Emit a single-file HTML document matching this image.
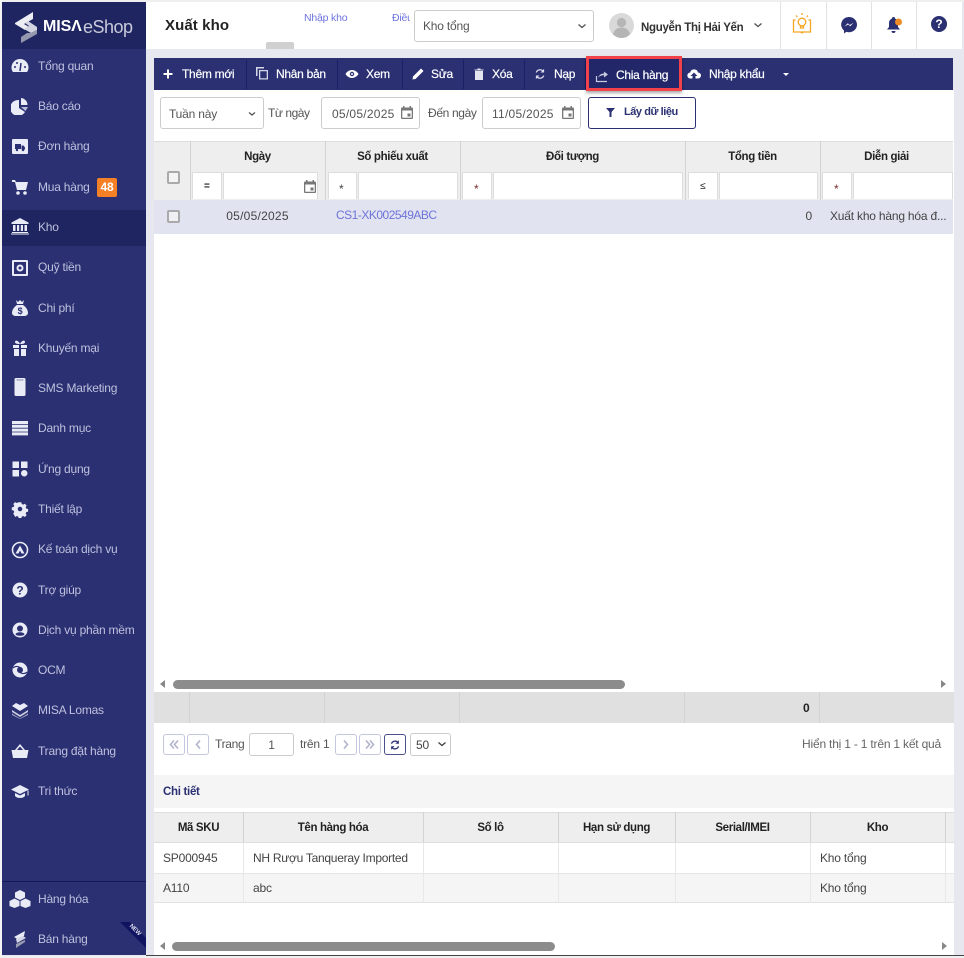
<!DOCTYPE html>
<html lang="vi"><head><meta charset="utf-8"><title>Xuất kho</title>
<style>
*{box-sizing:border-box}
html,body{margin:0;padding:0}
body{width:964px;height:958px;position:relative;overflow:hidden;background:#e7e8ef;font-family:"Liberation Sans","Noto Sans CJK SC",sans-serif;font-size:12px;color:#444;letter-spacing:-.2px}
.a{position:absolute}
.t{position:absolute;white-space:nowrap;line-height:16px}
.c{text-align:center}
.r{text-align:right}
.b{font-weight:bold;color:#222;font-size:11.5px;letter-spacing:-.35px}
.d{letter-spacing:.25px}
.nav{position:absolute;left:38px;color:#bfc1de;white-space:nowrap;line-height:16px;font-size:12px;letter-spacing:-.22px}
.ic{position:absolute;left:11px;width:18px;height:18px;fill:#e9ebf6}
.tb{position:absolute;top:66px;color:#fff;line-height:16px;white-space:nowrap;font-size:12px;letter-spacing:-.28px;-webkit-text-stroke:.2px #fff}
.sep{position:absolute;top:60px;width:1px;height:29px;background:#1b1f66}
.tic{position:absolute;width:14px;height:14px;fill:#fff}
.inp{position:absolute;background:#fff;border:1px solid #ccc;border-radius:3px}
.f{position:absolute;top:172px;height:27px;background:#fff;border:1px solid #ddd;border-bottom:0}
.pg{position:absolute;top:734px;width:22px;height:21px;border:1px solid #c5c7dc;border-radius:3px;background:#fff}
.pg svg{position:absolute;left:5px;top:4px}
.vl{position:absolute;width:1px;background:#d3d3d3}
</style></head><body>

<!-- page edges -->
<div class="a" style="left:0;top:0;width:964px;height:2px;background:#efefef"></div>
<div class="a" style="left:0;top:0;width:2px;height:958px;background:#f4f4f4"></div>

<!-- header -->
<div class="a" style="left:146px;top:2px;width:816px;height:47px;background:#fff"></div>
<div class="t" style="left:165px;top:17px;font-size:15px;line-height:18px;color:#222;font-weight:bold;letter-spacing:.1px">Xuất kho</div>
<div class="a" style="left:266px;top:42px;width:28px;height:7px;background:#d0d0d0;border-radius:2px 2px 0 0"></div>
<div class="t" style="left:304px;top:10px;font-size:10.5px;color:#6d74e0">Nhập kho</div>
<div class="a" style="left:392px;top:10px;width:18px;height:16px;overflow:hidden"><span class="t" style="left:0;top:0;font-size:10.5px;color:#6d74e0">Điều</span></div>
<div class="inp" style="left:414px;top:10px;width:180px;height:32px"></div>
<div class="t" style="left:423px;top:18px;color:#555">Kho tổng</div>
<svg class="a" style="left:577px;top:23px" width="10" height="7"><path d="M1.5 1.500L5 4.500L8.500 1.500" fill="none" stroke="#555" stroke-width="1.400"/></svg>
<svg class="a" style="left:609px;top:13px" width="25" height="25" viewBox="0 0 25 25"><circle cx="12.500" cy="12.500" r="12.500" fill="#d9d9d9"/><circle cx="12.500" cy="9.500" r="4.600" fill="#b5b5b5"/><path d="M4 21c1.500-5 5-6.500 8.500-6.500S19.500 16 21 21c-2 2.500-5 4-8.500 4S6 23.500 4 21z" fill="#b5b5b5"/></svg>
<div class="t b" style="left:641px;top:20px;color:#333;letter-spacing:-.3px">Nguyễn Thị Hải Yến</div>
<svg class="a" style="left:753px;top:22px" width="10" height="7"><path d="M1.500 1.500L5 4.500L8.500 1.500" fill="none" stroke="#555" stroke-width="1.400"/></svg>
<div class="vl" style="left:780px;top:2px;height:47px;background:#e2e2e2"></div>
<div class="vl" style="left:826px;top:2px;height:47px;background:#e2e2e2"></div>
<div class="vl" style="left:871px;top:2px;height:47px;background:#e2e2e2"></div>
<div class="vl" style="left:916px;top:2px;height:47px;background:#e2e2e2"></div>
<svg class="a" style="left:792px;top:12px" width="20" height="22" viewBox="0 0 20 22" fill="none" stroke="#f5a623" stroke-width="1.300"><circle cx="10" cy="10" r="3.800"/><path d="M8.500 14h3v2h-3zM10 1v2M4 3.500l1.300 1.300M16 3.500l-1.300 1.300M3.500 8H1.500v12h17V8h-2M1.500 20h7l1.500 1 1.500-1h7"/></svg>
<svg class="a" style="left:841px;top:17px" width="16" height="17" viewBox="0 0 16 17"><path d="M8 0a8 7.600 0 0 1 0 15.200c-.9 0-1.700-.1-2.500-.4L3 16.500v-3A7.600 7.600 0 0 1 8 0z" fill="#2a3072"/><path d="M3.500 9.500L6.800 6.300l2 1.700L12.500 5.800 9.300 9.200 7.200 7.500z" fill="#fff"/></svg>
<svg class="a" style="left:886px;top:17px" width="18" height="17" viewBox="0 0 18 17"><path d="M7.500 0a1.500 1.500 0 0 1 1.500 1.500 5 5 0 0 1 3 4.500v4l2 2.500H1L3 10V6a5 5 0 0 1 3-4.500A1.500 1.500 0 0 1 7.500 0zM5.500 14h4a2 2 0 0 1-4 0z" fill="#2a3072"/><circle cx="12.500" cy="5" r="3.500" fill="#f08a24"/></svg>
<svg class="a" style="left:931px;top:16px" width="16" height="16" viewBox="0 0 16 16"><circle cx="8" cy="8" r="8" fill="#2a3072"/><text x="8" y="12" text-anchor="middle" fill="#fff" font-size="12" font-weight="bold" font-family="Liberation Sans">?</text></svg>

<!-- sidebar -->
<div class="a" style="left:2px;top:2px;width:144px;height:953px;background:#2a3072"></div>
<div class="a" style="left:2px;top:2px;width:144px;height:47px;background:#1f2560"></div>
<div class="a" style="left:2px;top:210px;width:144px;height:36px;background:#1f2560"></div>
<div class="a" style="left:2px;top:881px;width:144px;height:1px;background:#15195a"></div>
<svg class="a" style="left:14px;top:10px" width="24" height="34" viewBox="0 0 24 34"><path d="M19 2v7l-9 5 5 3-4 3L1 14v-1z" fill="#eceef4"/><path d="M14 11l9 6v3l-6 3-7-4 5-3-4-3z" fill="#d2d3e0"/><path d="M23 20v4L7 33v-6l6-4 4 0z" fill="#9497ad"/></svg>
<div class="t" style="left:43px;top:17px;font-size:16px;line-height:20px;font-weight:bold;color:#fff;letter-spacing:-.1px">MISΛ</div>
<div class="t" style="left:83px;top:16px;font-size:18px;line-height:22px;color:#c9cadb;letter-spacing:-.5px">eShop</div>

<div class="nav" style="top:58px">Tổng quan</div>
<div class="nav" style="top:98px">Báo cáo</div>
<div class="nav" style="top:138px">Đơn hàng</div>
<div class="nav" style="top:179px">Mua hàng</div>
<div class="nav" style="top:219px">Kho</div>
<div class="nav" style="top:259px">Quỹ tiền</div>
<div class="nav" style="top:300px">Chi phí</div>
<div class="nav" style="top:340px">Khuyến mại</div>
<div class="nav" style="top:380px">SMS Marketing</div>
<div class="nav" style="top:420px">Danh mục</div>
<div class="nav" style="top:461px">Ứng dụng</div>
<div class="nav" style="top:501px">Thiết lập</div>
<div class="nav" style="top:541px">Kế toán dịch vụ</div>
<div class="nav" style="top:582px">Trợ giúp</div>
<div class="nav" style="top:622px">Dịch vụ phần mềm</div>
<div class="nav" style="top:662px">OCM</div>
<div class="nav" style="top:702px">MISA Lomas</div>
<div class="nav" style="top:743px">Trang đặt hàng</div>
<div class="nav" style="top:783px">Tri thức</div>
<div class="nav" style="top:891px">Hàng hóa</div>
<div class="nav" style="top:931px">Bán hàng</div>
<div class="a" style="left:97px;top:178px;width:20px;height:19px;background:#f58025;border-radius:2px;color:#fff;font-weight:bold;text-align:center;line-height:19px;font-size:12px">48</div>

<svg class="ic" style="top:57px" viewBox="0 0 18 18"><path d="M9 2a8.500 8.500 0 0 1 8.500 8.500c0 2-.6 3.500-1.500 4.500H2c-.9-1-1.500-2.500-1.500-4.500A8.500 8.500 0 0 1 9 2z"/><path d="M9 14L10 6" stroke="#2a3072" stroke-width="1.500"/><circle cx="4" cy="10" r="1" fill="#2a3072"/><circle cx="14" cy="10" r="1" fill="#2a3072"/><circle cx="6" cy="6" r="1" fill="#2a3072"/></svg>
<svg class="ic" style="top:97px" viewBox="0 0 18 18"><path d="M8 3v8l6 4A8 8 0 1 1 8 3z"/><path d="M10 1a7 7 0 0 1 6.500 7H10z"/><path d="M10 10h7l-2.500 4z" fill="#b9bcda"/></svg>
<svg class="ic" style="top:137px" viewBox="0 0 18 18"><path d="M2 2h14a1 1 0 0 1 1 1v13a1 1 0 0 1-1 1H2a1 1 0 0 1-1-1V3a1 1 0 0 1 1-1z"/><path d="M4 7h6v5H4zM10.500 8.500h2l1.500 2v2h-3.500z" fill="#2a3072"/><circle cx="6" cy="13" r="1.200" fill="#2a3072"/><circle cx="12" cy="13" r="1.200" fill="#2a3072"/></svg>
<svg class="ic" style="top:178px" viewBox="0 0 18 18"><path d="M1 2h3l1 2h12l-2 8H6L4 4H1z"/><circle cx="7" cy="15" r="1.800"/><circle cx="14" cy="15" r="1.800"/></svg>
<svg class="ic" style="top:217px" viewBox="0 0 18 18"><path d="M9 1l8.500 4.500v1.500H.5V5.500zM2 8h2.500v6H2zM6 8h2.200v6H6zM9.800 8H12v6H9.800zM13.500 8H16v6h-2.500zM1 15h16v1H1zM0 16.500h18v1H0z"/></svg>
<svg class="ic" style="top:259px" viewBox="0 0 18 18"><path fill-rule="evenodd" d="M2 1h14a1 1 0 0 1 1 1v14a1 1 0 0 1-1 1H2a1 1 0 0 1-1-1V2a1 1 0 0 1 1-1zm1 2v12h12V3zm6 2.500a3.500 3.500 0 1 1 0 7 3.500 3.500 0 0 1 0-7zm0 2a1.500 1.500 0 1 0 0 3 1.500 1.500 0 0 0 0-3z"/></svg>
<svg class="ic" style="top:299px" viewBox="0 0 18 18"><path d="M5 1l2 2 2-2 2 2 2-2-1 4H6zM6 6h6c3 2 5 5 5 8 0 2-2 3-4 3H5c-2 0-4-1-4-3 0-3 2-6 5-8z"/><text x="9" y="15" text-anchor="middle" font-size="9" font-weight="bold" fill="#2a3072" font-family="Liberation Sans">$</text></svg>
<svg class="ic" style="top:339px" viewBox="0 0 18 18"><path d="M2 6h6v3H2zM10 6h6v3h-6zM3 10h5v7H3zM10 10h5v7h-5zM9 5C7 1 4 1 4 3s3 2 5 2zM9 5c2-4 5-4 5-2s-3 2-5 2z"/></svg>
<svg class="ic" style="top:378px" viewBox="0 0 18 18"><path d="M5 0h8a1.500 1.500 0 0 1 1.500 1.500v15A1.500 1.500 0 0 1 13 18H5a1.500 1.500 0 0 1-1.500-1.500v-15A1.500 1.500 0 0 1 5 0z"/><path d="M6 1.500v.5h6v-.5" stroke="#2a3072" fill="none" stroke-width=".6"/></svg>
<svg class="ic" style="top:419px" viewBox="0 0 18 18"><path d="M1 2h16v3H1zM1 5.800h16v3H1zM1 9.600h16v3H1zM1 13.400h16v3H1z"/></svg>
<svg class="ic" style="top:460px" viewBox="0 0 18 18"><path d="M1.500 1.500h6.500v6.500H1.500zM10 1.500h6.500v6.500H10zM1.500 10h6.500v6.500H1.500z"/><circle cx="13.250" cy="13.250" r="3.250"/></svg>
<svg class="ic" style="top:500px" viewBox="0 0 18 18"><path fill-rule="evenodd" d="M7.500 1.500h3l.4 2 1.700.7 1.700-1.100 2.100 2.100-1.100 1.700.7 1.700 2 .4v3l-2 .4-.7 1.700 1.100 1.700-2.100 2.100-1.700-1.100-1.700.7-.4 2h-3l-.4-2-1.700-.7-1.700 1.100L1.500 14l1.100-1.700-.7-1.700-2-.4v-3l2-.4.7-1.700L1.500 3.400 3.600 1.300l1.700 1.100L7 1.700zM9 6.500a2.500 2.500 0 1 0 0 5 2.500 2.500 0 0 0 0-5z" transform="translate(.9 .9) scale(.9)"/></svg>
<svg class="ic" style="top:541px" viewBox="0 0 18 18"><circle cx="9" cy="9" r="7.500" fill="none" stroke="#e9ebf6" stroke-width="1.600"/><path d="M9 4.500L13.500 12.500h-3L9 9.500 7.500 12.500h-3z"/></svg>
<svg class="ic" style="top:581px" viewBox="0 0 18 18"><circle cx="9" cy="9" r="7.500"/><text x="9" y="13.500" text-anchor="middle" font-size="12" font-weight="bold" fill="#2a3072" font-family="Liberation Sans">?</text></svg>
<svg class="ic" style="top:621px" viewBox="0 0 18 18"><path fill-rule="evenodd" d="M9 1.500a7.500 7.500 0 1 1 0 15 7.500 7.500 0 0 1 0-15zM9 4.500a3 3 0 1 0 0 6 3 3 0 0 0 0-6zM4.500 13.500c1 1 2.800 1.300 4.500 1.300s3.500-.3 4.500-1.300C13 11.800 11 11.300 9 11.300s-4 .5-4.500 2.200z"/></svg>
<svg class="ic" style="top:661px" viewBox="0 0 18 18"><path fill-rule="evenodd" d="M9 1.500a7.500 7.500 0 1 1 0 15 7.500 7.500 0 0 1 0-15zM9 6a3 3 0 1 0 0 6 3 3 0 0 0 0-6z"/><path d="M2 7c3-3 6-1 8 0M16 11c-3 3-6 1-8 0" stroke="#2a3072" fill="none" stroke-width="1.200"/></svg>
<svg class="ic" style="top:701px" viewBox="0 0 18 18"><path d="M1 5l4-3 4 2 4-2 4 3-8 5z"/><path d="M1 9l8 5 8-5v2l-8 5-8-5z" fill="#c8cadf"/><path d="M1 12.500l8 5 8-5v1.500l-8 4-8-4z" fill="#9fa2c4"/></svg>
<svg class="ic" style="top:742px" viewBox="0 0 18 18"><path d="M9 2l5 6h3.500l-1.500 8H2L.5 8H4zM6 8h6L9 4.500z"/></svg>
<svg class="ic" style="top:782px" viewBox="0 0 18 18"><path d="M9 3L18 7.500 9 12 0 7.500zM4 11l5 2.500 5-2.500v3c-1.500 1.500-3 2-5 2s-3.500-.5-5-2z"/><path d="M16.500 8.500v5h1v-5z"/></svg>
<svg class="ic" style="top:890px;left:9px;width:22px;height:18px" viewBox="0 0 22 18"><path d="M11 0l5 2.500v5l-5 2.500-5-2.500v-5zM5.500 8.500l5 2.500v5l-5 2-5-2v-5zM16.500 8.500l5 2.500v5l-5 2-5-2v-5z"/></svg>
<svg class="ic" style="top:930px" viewBox="0 0 18 18"><path d="M14 1L3 7l5 3 4-2-6 2 0 0 7-4z"/><path d="M5 9l7-3 3 2-9 5z" fill="#d5d6e4"/><path d="M14 10v2L5 18v-4z" fill="#9a9cb2"/></svg>
<svg class="a" style="left:120px;top:922px" width="26" height="26" viewBox="0 0 26 26"><path d="M0 0h10l16 16v10z" fill="#0f1360"/><text x="14" y="9" font-size="6" font-weight="bold" fill="#dfe0ee" font-family="Liberation Sans" transform="rotate(45 14 9)" text-anchor="middle">NEW</text></svg>

<!-- main white panel -->
<div class="a" style="left:154px;top:58px;width:799px;height:32px;background:#2a3072"></div>
<div class="a" style="left:154px;top:90px;width:800px;height:865px;background:#fff"></div>

<!-- toolbar -->
<svg class="tic" style="left:161px;top:67px" viewBox="0 0 14 14"><path d="M6 2.500h2V6h3.500v2H8v3.500H6V8H2.500V6H6z"/></svg>
<div class="tb" style="left:182px">Thêm mới</div>
<div class="sep" style="left:246px"></div>
<svg class="tic" style="left:255px;top:66px;fill:#d5d6e6" viewBox="0 0 14 14"><path d="M1 1h8v1.500H2.500V10H1zM4 4h9v9.500H4zM5.300 5.300v7h6.400v-7z" fill-rule="evenodd"/></svg>
<div class="tb" style="left:276px">Nhân bản</div>
<div class="sep" style="left:337px"></div>
<svg class="tic" style="left:345px;top:67px" viewBox="0 0 14 14"><path fill-rule="evenodd" d="M7 3c3 0 5.300 2 6.500 4-1.200 2-3.500 4-6.500 4S1.700 9 .5 7C1.700 5 4 3 7 3zm0 1.800a2.200 2.200 0 1 0 0 4.400 2.200 2.200 0 0 0 0-4.400zM7 6a1 1 0 1 1 0 2 1 1 0 0 1 0-2z"/></svg>
<div class="tb" style="left:366px">Xem</div>
<div class="sep" style="left:402px"></div>
<svg class="tic" style="left:411px;top:67px" viewBox="0 0 14 14"><path d="M10 1.500l2.500 2.500-8 8L1.500 12.500 2 9.500z"/></svg>
<div class="tb" style="left:431px">Sửa</div>
<div class="sep" style="left:463px"></div>
<svg class="tic" style="left:472px;top:67px;fill:#e4e5ef" viewBox="0 0 14 14"><path d="M3 4h8v9H3zM2.500 2.500h9v1h-9zM5.500 1.500h3v1h-3z"/></svg>
<div class="tb" style="left:492px">Xóa</div>
<div class="sep" style="left:524px"></div>
<svg class="tic" style="left:534px;top:68px;fill:#dcdded;width:12px;height:12px" viewBox="0 0 14 14"><path d="M10.500 3.500A4.800 4.800 0 0 0 2.600 5.200M3.500 10.500a4.800 4.800 0 0 0 7.900-1.700" fill="none" stroke="#dcdded" stroke-width="1.500"/><path d="M11.800 1v4.300H7.600zM2.200 13V8.700h4.200z"/></svg>
<div class="tb" style="left:554px">Nạp</div>
<div class="sep" style="left:585px"></div>
<div class="a" style="left:586px;top:56px;width:96px;height:35px;background:#22276a;border:3px solid #f1414b;box-shadow:0 2px 3px rgba(0,0,0,.35)"></div>
<svg class="tic" style="left:595px;top:69px" viewBox="0 0 14 14"><path d="M1.500 7v5.500h10.500" fill="none" stroke="#c7c9dc" stroke-width="1.200"/><path d="M3 9c1-3 3-4.500 6-4.500V2.500L13 5.500 9 8.500V6.300C6.500 6.300 4.500 7 3 9z" fill="#c7c9dc"/></svg>
<div class="tb" style="left:616px;top:67px">Chia hàng</div>
<svg class="tic" style="left:687px;top:67px" viewBox="0 0 14 14"><path d="M3.500 11.500a3 3 0 0 1-.3-6A4 4 0 0 1 11 5.500a3 3 0 0 1 0 6H8.500V9h2L7 5.500 3.500 9h2v2.500z"/></svg>
<div class="tb" style="left:709px">Nhập khẩu</div>
<div class="a" style="left:783px;top:73px;border:3px solid transparent;border-top-color:#fff;border-bottom:0"></div>

<!-- filters -->
<div class="inp" style="left:160px;top:97px;width:104px;height:32px"></div>
<div class="t" style="left:169px;top:106px;color:#555">Tuần này</div>
<svg class="a" style="left:247px;top:111px" width="10" height="7"><path d="M2 1.500L5 4L8 1.500" fill="none" stroke="#555" stroke-width="1.300"/></svg>
<div class="t" style="left:268px;top:105px;color:#555;letter-spacing:-.45px">Từ ngày</div>
<div class="inp" style="left:321px;top:97px;width:99px;height:32px"></div>
<div class="t d" style="left:332px;top:106px;color:#555">05/05/2025</div>
<svg class="a" style="left:401px;top:106px" width="12" height="13" viewBox="0 0 12 13"><path fill-rule="evenodd" d="M2 0h1.500v1.500h5V0H10v1.500h1a1 1 0 0 1 1 1V12a1 1 0 0 1-1 1H1a1 1 0 0 1-1-1V2.500a1 1 0 0 1 1-1h1zM1.300 4.500v7.200h9.400V4.500zM6.500 7.500h3v3h-3z" fill="#777"/></svg>
<div class="t" style="left:428px;top:105px;color:#555;letter-spacing:-.35px">Đến ngày</div>
<div class="inp" style="left:482px;top:97px;width:99px;height:32px"></div>
<div class="t d" style="left:492px;top:106px;color:#555">11/05/2025</div>
<svg class="a" style="left:562px;top:106px" width="12" height="13" viewBox="0 0 12 13"><path fill-rule="evenodd" d="M2 0h1.500v1.500h5V0H10v1.500h1a1 1 0 0 1 1 1V12a1 1 0 0 1-1 1H1a1 1 0 0 1-1-1V2.500a1 1 0 0 1 1-1h1zM1.300 4.500v7.200h9.400V4.500zM6.500 7.500h3v3h-3z" fill="#777"/></svg>
<div class="a" style="left:588px;top:97px;width:108px;height:32px;border:1px solid #2a3072;border-radius:3px;background:#fff"></div>
<svg class="a" style="left:606px;top:108px" width="9" height="9" viewBox="0 0 9 9"><path d="M0 0h9L5.500 4v5h-2V4z" fill="#2a3072"/></svg>
<div class="t" style="left:624px;top:104px;font-size:11px;font-weight:bold;color:#2a3072;letter-spacing:-.45px">Lấy dữ liệu</div>

<!-- table 1 -->
<div class="a" style="left:154px;top:141px;width:799px;height:59px;background:#eee;border-top:1px solid #ddd"></div>
<div class="vl" style="left:190px;top:141px;height:59px"></div>
<div class="vl" style="left:325px;top:141px;height:59px"></div>
<div class="vl" style="left:460px;top:141px;height:59px"></div>
<div class="vl" style="left:685px;top:141px;height:59px"></div>
<div class="vl" style="left:820px;top:141px;height:59px"></div>
<div class="t c b" style="left:190px;width:135px;top:148px;padding-top:1px">Ngày</div>
<div class="t c b" style="left:325px;width:135px;top:148px;padding-top:1px">Số phiếu xuất</div>
<div class="t c b" style="left:460px;width:225px;top:148px;padding-top:1px">Đối tượng</div>
<div class="t c b" style="left:685px;width:135px;top:148px;padding-top:1px">Tổng tiền</div>
<div class="t c b" style="left:820px;width:133px;top:148px;padding-top:1px">Diễn giải</div>
<div class="a" style="left:167px;top:171px;width:13px;height:13px;border:2px solid #aaa;border-radius:2px;background:#f4f4f4"></div>

<div class="f" style="left:192px;width:30px"></div><div class="f" style="left:223px;width:95px"></div>
<div class="f" style="left:328px;width:29px"></div><div class="f" style="left:358px;width:100px"></div>
<div class="f" style="left:462px;width:30px"></div><div class="f" style="left:493px;width:190px"></div>
<div class="f" style="left:688px;width:30px"></div><div class="f" style="left:719px;width:99px"></div>
<div class="f" style="left:822px;width:30px"></div><div class="f" style="left:853px;width:100px"></div>
<div class="t" style="left:204px;top:179px;font-size:10px;font-weight:bold;color:#222">=</div>
<div class="t" style="left:339px;top:181px;font-size:12px;color:#444">*</div>
<div class="t" style="left:474px;top:181px;font-size:12px;color:#7a3030">*</div>
<div class="t" style="left:700px;top:179px;font-size:10px;color:#222">≤</div>
<div class="t" style="left:834px;top:181px;font-size:12px;color:#7a3030">*</div>
<svg class="a" style="left:304px;top:180px" width="12" height="13" viewBox="0 0 12 13"><path fill-rule="evenodd" d="M2 0h1.500v1.500h5V0H10v1.500h1a1 1 0 0 1 1 1V12a1 1 0 0 1-1 1H1a1 1 0 0 1-1-1V2.500a1 1 0 0 1 1-1h1zM1.300 4.500v7.200h9.400V4.500zM6.500 7.500h3v3h-3z" fill="#777"/></svg>

<div class="a" style="left:154px;top:200px;width:799px;height:34px;background:#e1e3f0"></div>
<div class="a" style="left:167px;top:210px;width:13px;height:13px;border:2px solid #aaa;border-radius:2px;background:#f0f0f4"></div>
<div class="t c d" style="left:190px;width:135px;top:208px;color:#444">05/05/2025</div>
<div class="t" style="left:336px;top:207px;color:#6d74d8;letter-spacing:-.5px">CS1-XK002549ABC</div>
<div class="t r" style="left:700px;width:112px;top:208px;color:#444">0</div>
<div class="t" style="left:830px;top:208px;color:#444">Xuất kho hàng hóa đ...</div>

<!-- scrollbar 1 -->
<div class="a" style="left:160px;top:680px;border:4.500px solid transparent;border-right:5px solid #888;border-left:0;height:0"></div>
<div class="a" style="left:173px;top:680px;width:452px;height:9px;background:#8c8c8c;border-radius:5px"></div>
<div class="a" style="left:941px;top:680px;border:4.500px solid transparent;border-left:5px solid #888;border-right:0;height:0"></div>

<!-- footer row -->
<div class="a" style="left:154px;top:692px;width:800px;height:31px;background:#e0e0e0"></div>
<div class="vl" style="left:189px;top:692px;height:31px"></div>
<div class="vl" style="left:324px;top:692px;height:31px"></div>
<div class="vl" style="left:459px;top:692px;height:31px"></div>
<div class="vl" style="left:684px;top:692px;height:31px"></div>
<div class="vl" style="left:819px;top:692px;height:31px"></div>
<div class="t b" style="left:803px;top:700px;font-size:12px">0</div>

<!-- pager -->
<div class="pg" style="left:163px"><svg width="10" height="11" viewBox="0 0 10 11" fill="none" stroke="#b0b3cc" stroke-width="1.600"><path d="M5 1.500L1.500 5.500 5 9.500M9 1.500L5.500 5.500 9 9.500"/></svg></div>
<div class="pg" style="left:187px"><svg width="10" height="11" viewBox="0 0 10 11" fill="none" stroke="#b0b3cc" stroke-width="1.600"><path d="M7 1.500L3.500 5.500 7 9.500"/></svg></div>
<div class="t" style="left:215px;top:736px;color:#555;letter-spacing:-.3px">Trang</div>
<div class="inp" style="left:249px;top:733px;width:45px;height:23px"></div>
<div class="t c" style="left:249px;width:45px;top:737px;color:#555">1</div>
<div class="t" style="left:300px;top:736px;color:#555">trên 1</div>
<div class="pg" style="left:335px"><svg width="10" height="11" viewBox="0 0 10 11" fill="none" stroke="#b0b3cc" stroke-width="1.600"><path d="M3 1.500L6.500 5.500 3 9.500"/></svg></div>
<div class="pg" style="left:359px"><svg width="10" height="11" viewBox="0 0 10 11" fill="none" stroke="#b0b3cc" stroke-width="1.600"><path d="M1 1.500L4.500 5.500 1 9.500M5 1.500L8.500 5.500 5 9.500"/></svg></div>
<div class="pg" style="left:384px;border-color:#4a508c"></div>
<svg class="a" style="left:389px;top:739px" width="12" height="12" viewBox="0 0 14 14"><path d="M10.300 3.700A4.600 4.600 0 0 0 2.800 5.500M3.700 10.300a4.600 4.600 0 0 0 7.500-1.800" fill="none" stroke="#2a3072" stroke-width="1.500"/><path d="M11.500 1.500v4H7.500zM2.500 12.500v-4h4z" fill="#2a3072"/></svg>
<div class="inp" style="left:410px;top:733px;width:41px;height:23px"></div>
<div class="t" style="left:416px;top:737px;color:#444">50</div>
<svg class="a" style="left:437px;top:741px" width="10" height="7"><path d="M1.500 1.500L5 4.500L8.500 1.500" fill="none" stroke="#444" stroke-width="1.400"/></svg>
<div class="t r" style="left:741px;width:200px;top:736px;color:#666">Hiển thị 1 - 1 trên 1 kết quả</div>

<!-- detail -->
<div class="a" style="left:154px;top:775px;width:800px;height:33px;background:#f5f5f5"></div>
<div class="t" style="left:163px;top:783px;padding-top:1px;font-weight:bold;color:#2a3072;font-size:11.500px;letter-spacing:-.3px">Chi tiết</div>

<div class="a" style="left:154px;top:812px;width:800px;height:31px;background:#eee;border-top:1px solid #ddd;border-bottom:1px solid #ddd"></div>
<div class="a" style="left:154px;top:873px;width:800px;height:30px;background:#f5f5f5;border-top:1px solid #e6e6e6;border-bottom:1px solid #e2e2e2"></div>
<div class="vl" style="left:243px;top:812px;height:30px"></div>
<div class="vl" style="left:423px;top:812px;height:30px"></div>
<div class="vl" style="left:558px;top:812px;height:30px"></div>
<div class="vl" style="left:675px;top:812px;height:30px"></div>
<div class="vl" style="left:810px;top:812px;height:30px"></div>
<div class="vl" style="left:945px;top:812px;height:30px"></div>
<div class="vl" style="left:243px;top:843px;height:60px;background:#e8e8e8"></div>
<div class="vl" style="left:423px;top:843px;height:60px;background:#e8e8e8"></div>
<div class="vl" style="left:558px;top:843px;height:60px;background:#e8e8e8"></div>
<div class="vl" style="left:675px;top:843px;height:60px;background:#e8e8e8"></div>
<div class="vl" style="left:810px;top:843px;height:60px;background:#e8e8e8"></div>
<div class="vl" style="left:945px;top:843px;height:60px;background:#e8e8e8"></div>
<div class="t c b" style="left:154px;width:89px;top:819px;padding-top:1px">Mã SKU</div>
<div class="t c b" style="left:243px;width:180px;top:819px;padding-top:1px">Tên hàng hóa</div>
<div class="t c b" style="left:423px;width:135px;top:819px;padding-top:1px">Số lô</div>
<div class="t c b" style="left:558px;width:117px;top:819px;padding-top:1px">Hạn sử dụng</div>
<div class="t c b" style="left:675px;width:135px;top:819px;padding-top:1px">Serial/IMEI</div>
<div class="t c b" style="left:810px;width:135px;top:819px;padding-top:1px">Kho</div>
<div class="t" style="left:163px;top:850px">SP000945</div>
<div class="t" style="left:253px;top:850px;letter-spacing:-.27px">NH Rượu Tanqueray Imported</div>
<div class="t" style="left:820px;top:850px">Kho tổng</div>
<div class="t" style="left:163px;top:880px">A110</div>
<div class="t" style="left:253px;top:880px">abc</div>
<div class="t" style="left:820px;top:880px">Kho tổng</div>

<!-- scrollbar 2 -->
<div class="a" style="left:160px;top:942px;border:4.500px solid transparent;border-right:5px solid #888;border-left:0;height:0"></div>
<div class="a" style="left:172px;top:942px;width:383px;height:9px;background:#8c8c8c;border-radius:5px"></div>
<div class="a" style="left:942px;top:942px;border:4.500px solid transparent;border-left:5px solid #888;border-right:0;height:0"></div>

<!-- bottom edge -->
<div class="a" style="left:146px;top:955px;width:818px;height:1px;background:#444"></div>
<div class="a" style="left:0;top:956px;width:964px;height:2px;background:#f0f0f0"></div>
</body></html>
